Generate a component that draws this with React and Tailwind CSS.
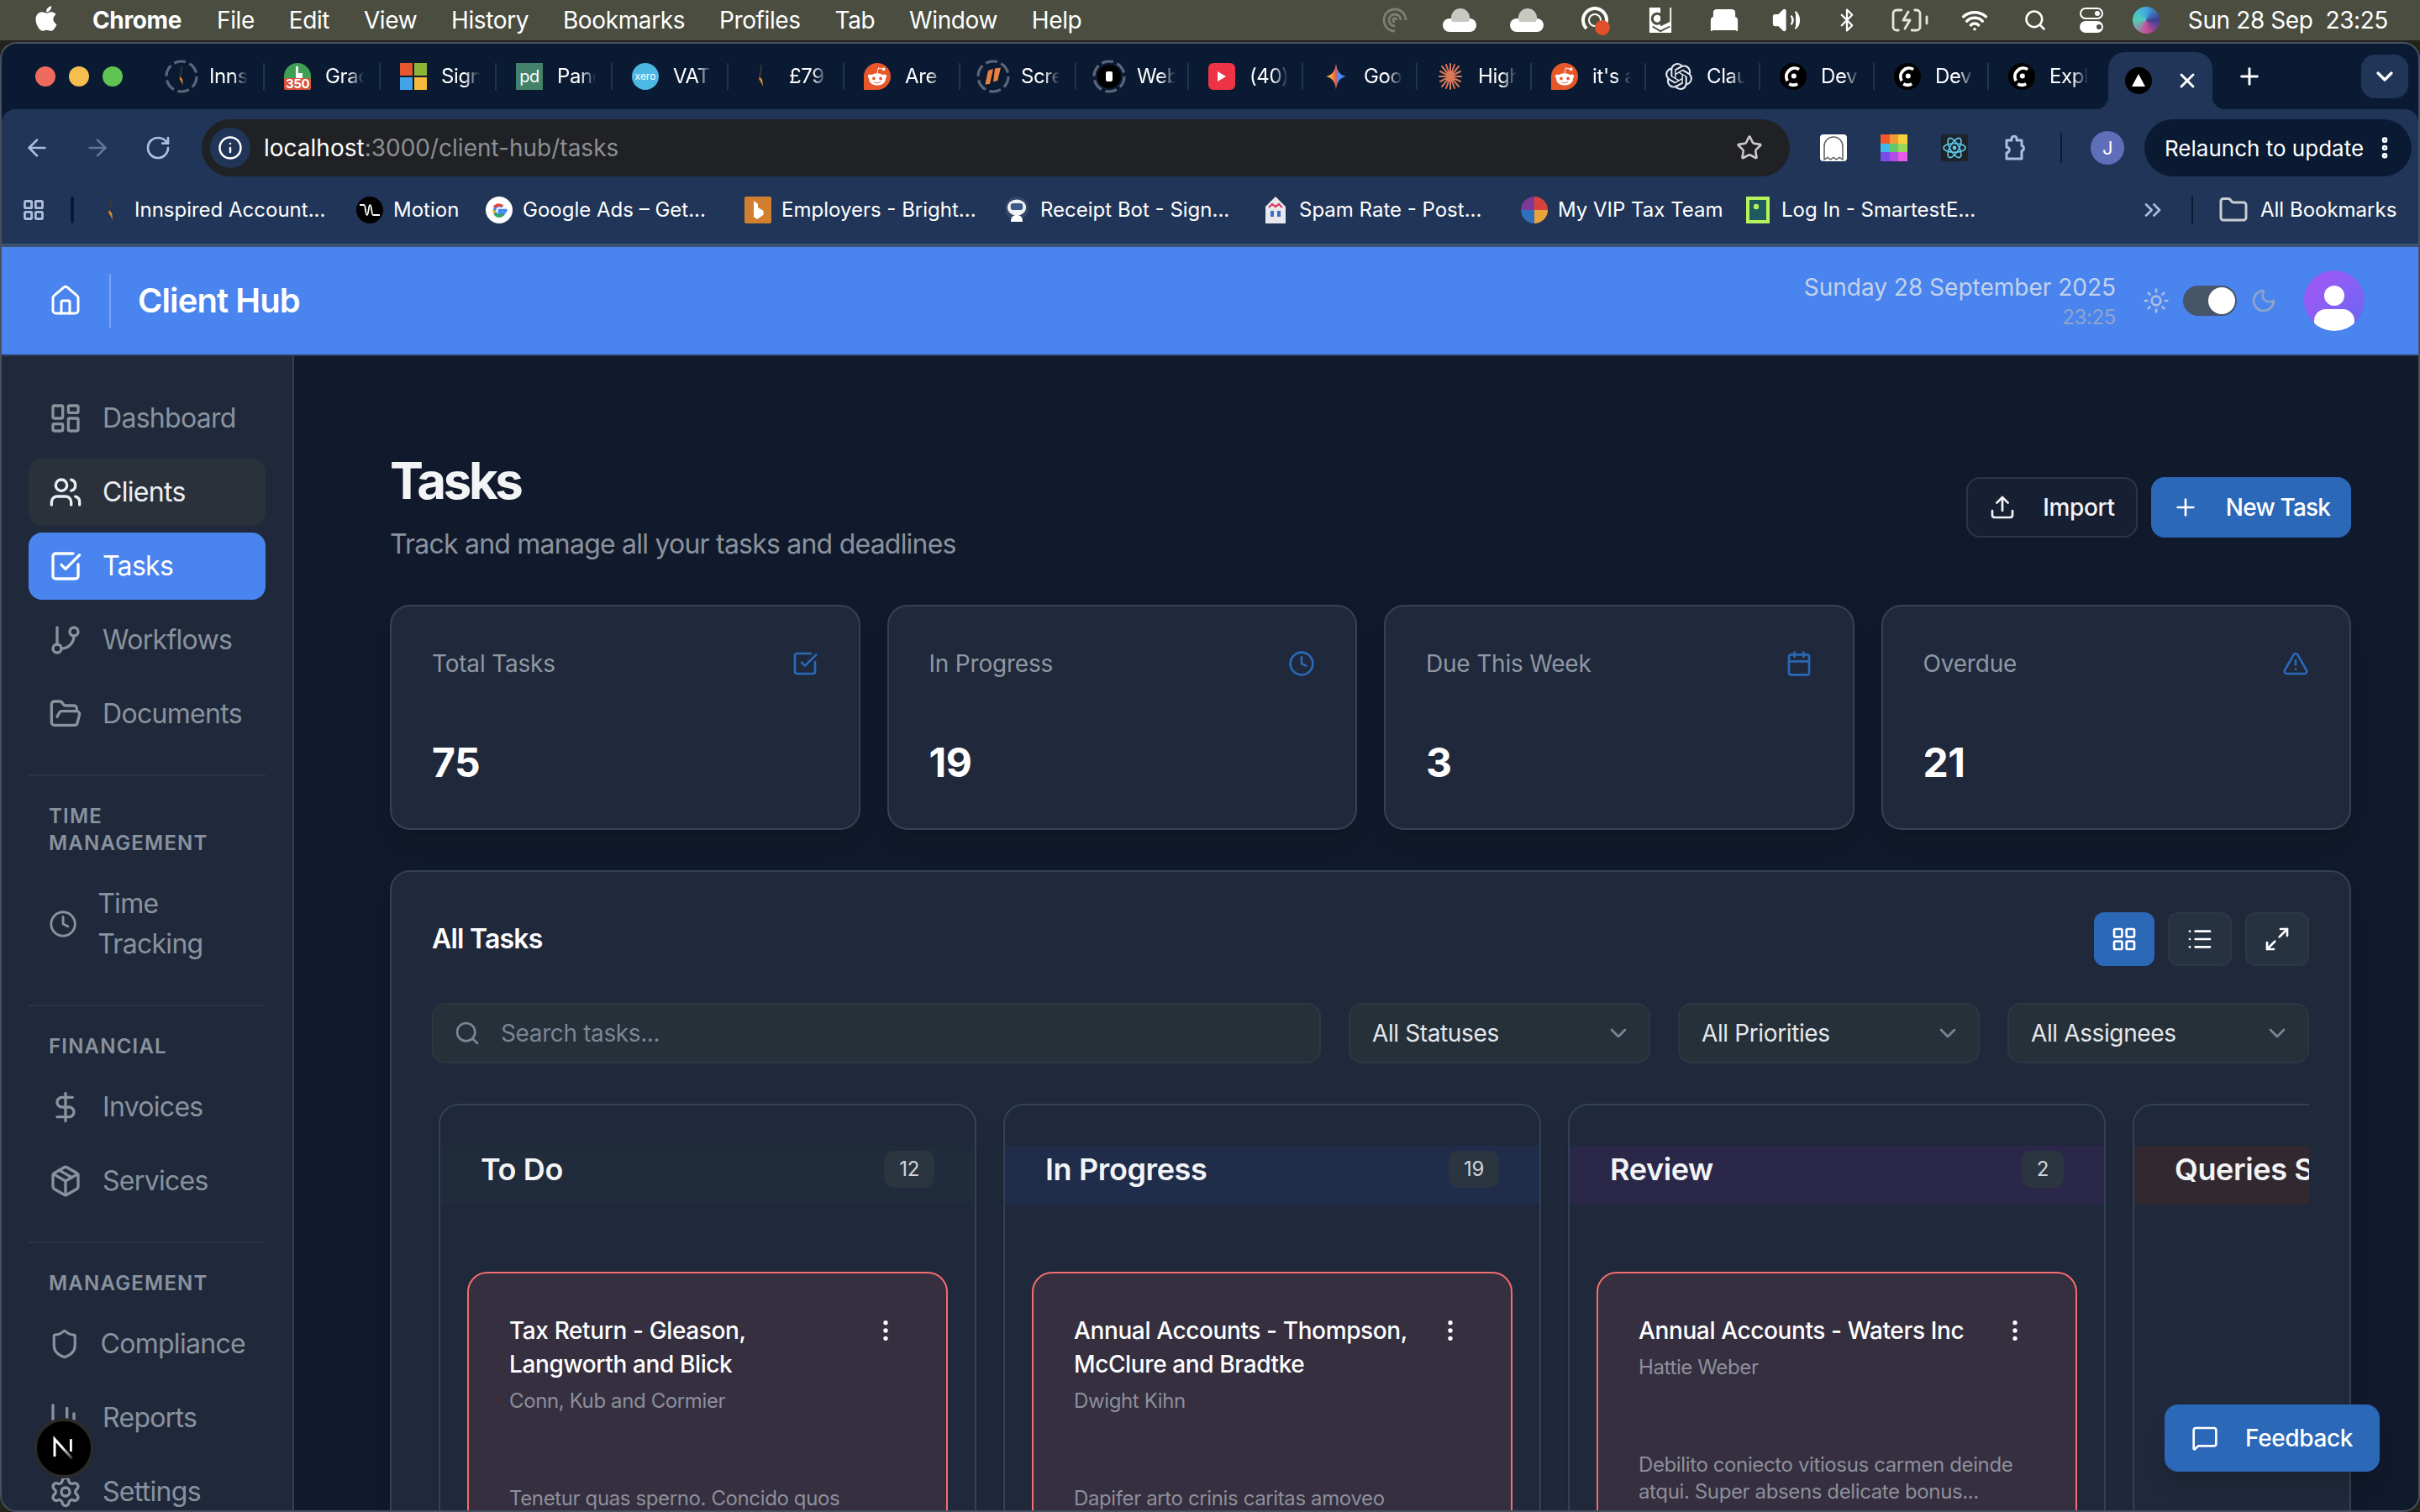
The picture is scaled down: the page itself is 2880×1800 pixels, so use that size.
import React from "react";
import {
  ArrowLeft,
  ArrowRight,
  BatteryCharging,
  BedDouble,
  Bluetooth,
  Calendar,
  ChartColumn,
  ChevronDown,
  ChevronsRight,
  Clock,
  DollarSign,
  EllipsisVertical,
  Folder,
  FolderOpen,
  House,
  Info,
  LayoutDashboard,
  LayoutGrid,
  List,
  Maximize2,
  MessageSquare,
  Moon,
  Package,
  Plus,
  RotateCw,
  Search,
  Settings,
  Shield,
  SquareCheckBig,
  Star,
  Sun,
  TriangleAlert,
  Upload,
  Users,
  Volume2,
  Wifi,
  X,
} from "lucide-react";
import { FaApple, FaRedditAlien } from "react-icons/fa";
import { SiOpenai } from "react-icons/si";

function GitBranchOld({ className }) {
  return (
    <svg viewBox="0 0 24 24" fill="none" stroke="currentColor" strokeWidth="2" strokeLinecap="round" strokeLinejoin="round" className={className}>
      <line x1="6" y1="3" x2="6" y2="15" />
      <circle cx="18" cy="6" r="3" />
      <circle cx="6" cy="18" r="3" />
      <path d="M18 9a9 9 0 0 1-9 9" />
    </svg>
  );
}

function Ring({ children }) {
  return (
    <div className="relative w-5 h-5 -mx-0.5 shrink-0 flex items-center justify-center">
      <svg viewBox="0 0 20 20" className="absolute inset-0 w-5 h-5">
        <circle cx="10" cy="10" r="9" fill="none" stroke="#5b6678" strokeWidth="1.6" strokeDasharray="7 2.4" />
      </svg>
      {children}
    </div>
  );
}

function Flame({ className = "w-4 h-4" }) {
  return (
    <svg viewBox="0 0 16 16" className={className}>
      <path d="M8 1 L7.6 6 L7 8" stroke="#3f3a33" strokeWidth="0.9" fill="none" />
      <path d="M7 8 L8.6 10 L9 14 L7.8 11.5 L6.6 9.5 Z" fill="#e88a2c" />
    </svg>
  );
}

function Reddit() {
  return (
    <div className="w-4 h-4 rounded-full rounded-bl-none bg-[#e8572a] flex items-center justify-center shrink-0">
      <FaRedditAlien className="w-3 h-3 text-white" />
    </div>
  );
}

function DevIcon() {
  return (
    <svg viewBox="0 0 16 16" className="w-4 h-4 shrink-0">
      <circle cx="8" cy="8" r="8" fill="#000" />
      <path d="M11.5 3.8 A5 5 0 0 0 4.6 10.6" fill="none" stroke="#fff" strokeWidth="1.9" />
      <circle cx="8.4" cy="7.8" r="1.5" fill="#fff" />
      <path d="M5.6 12.4 A5 5 0 0 0 10.6 12.4" fill="none" stroke="#fff" strokeWidth="1.9" />
    </svg>
  );
}

function MsLogo() {
  return (
    <div className="w-4 h-4 grid grid-cols-2 gap-[1px] shrink-0">
      <div className="bg-[#e4572e]" />
      <div className="bg-[#8db436]" />
      <div className="bg-[#43a3e8]" />
      <div className="bg-[#f6b93b]" />
    </div>
  );
}

const tabs = [
  {
    title: "Innspired",
    width: "w-[69px]",
    icon: (
      <Ring>
        <Flame className="w-3.5 h-3.5" />
      </Ring>
    ),
  },
  {
    title: "Grace",
    width: "w-[69px]",
    icon: (
      <svg viewBox="0 0 16 16" className="w-4 h-4 shrink-0">
        <path d="M0 8a8 8 0 0 1 16 0v2H0z" fill="#3f9f52" />
        <rect x="0" y="9" width="16" height="7" rx="1" fill="#d9513a" />
        <path d="M7 2h1.4v4H11v3H7z" fill="#fff" />
        <text x="8" y="15" textAnchor="middle" fontSize="7.5" fontWeight="700" fill="#fff" fontFamily="Inter">350</text>
      </svg>
    ),
  },
  { title: "Sign in", width: "w-[69px]", icon: <MsLogo /> },
  {
    title: "Pandadoc",
    width: "w-[69px]",
    icon: (
      <div className="w-4 h-4 bg-[#43826a] flex items-center justify-center shrink-0 text-[10px] leading-none text-white">pd</div>
    ),
  },
  {
    title: "VAT",
    width: "w-[69px]",
    icon: (
      <div className="w-4 h-4 rounded-full bg-[#4db8e4] flex items-center justify-center shrink-0 text-[6px] tracking-normal leading-none text-white">
        xero
      </div>
    ),
  },
  { title: "£79", width: "w-[69px]", icon: <Flame /> },
  { title: "Are you", width: "w-[69px]", icon: <Reddit /> },
  {
    title: "Screen",
    width: "w-[69px]",
    icon: (
      <Ring>
        <svg viewBox="0 0 12 12" className="w-3 h-3">
          <path d="M3 2.5 L6 1.5 L4 10.5 L1.2 10.8 Z M7 1.2 L10.5 0.8 L8.6 8.5 L6 9.2 Z" fill="#e8813f" />
        </svg>
      </Ring>
    ),
  },
  {
    title: "Web",
    width: "w-[67px]",
    icon: (
      <Ring>
        <div className="w-3.5 h-3.5 rounded-full bg-black flex items-center justify-center">
          <div className="w-1 h-1.5 bg-white rounded-[1px]" />
        </div>
      </Ring>
    ),
  },
  {
    title: "(40) You",
    width: "w-[68px]",
    icon: (
      <div className="w-4 h-4 rounded-[3px] bg-[#ee3344] flex items-center justify-center shrink-0">
        <div className="w-0 h-0 border-y-[3px] border-y-transparent border-l-[5px] border-l-white" />
      </div>
    ),
  },
  {
    title: "Google",
    width: "w-[68px]",
    icon: (
      <svg viewBox="0 0 16 16" className="w-4 h-4 shrink-0">
        <defs>
          <linearGradient id="gem" x1="0" y1="0" x2="1" y2="0">
            <stop offset="0.2" stopColor="#f5b53f" />
            <stop offset="0.5" stopColor="#e8574a" />
            <stop offset="0.6" stopColor="#4c8df6" />
            <stop offset="1" stopColor="#3f80f0" />
          </linearGradient>
        </defs>
        <path d="M8 0C8.4 4.6 10.4 7.4 14 8 10.4 8.6 8.4 11.4 8 16 7.6 11.4 5.6 8.6 2 8 5.6 7.4 7.6 4.6 8 0Z" fill="url(#gem)" />
      </svg>
    ),
  },
  {
    title: "Higher",
    width: "w-[68px]",
    icon: (
      <svg viewBox="0 0 16 16" className="w-4 h-4 shrink-0" stroke="#d97757" strokeWidth="1" strokeLinecap="round">
        <path d="M8 0.5V15.5M3 2L13 14M13 2L3 14M1.5 8H14.5M5.5 1L10.5 15M10.5 1L5.5 15M2 5L14 11M2 11L14 5" />
      </svg>
    ),
  },
  { title: "it's a", width: "w-[68px]", icon: <Reddit /> },
  { title: "Claude", width: "w-[68px]", icon: <SiOpenai className="w-4 h-4 text-[#e5e7eb] shrink-0" /> },
  { title: "Dev", width: "w-[68px]", icon: <DevIcon /> },
  { title: "Dev", width: "w-[68px]", icon: <DevIcon /> },
];

function Tab({ title, width, icon, last }) {
  return (
    <div className={`flex items-center h-4 shrink-0 pl-[11.5px] gap-[8.5px] ${width} ${last ? "" : "border-r border-r-[#1e3358]"}`}>
      <div className="w-4 h-4 flex items-center justify-center shrink-0">{icon}</div>
      <span className="w-[23px] overflow-hidden whitespace-nowrap text-xs leading-4 text-white [mask-image:linear-gradient(to_right,black_60%,transparent)]">
        {title}
      </span>
    </div>
  );
}

const bookmarks = [
  { title: "Innspired Account...", width: "w-[154px]", icon: <Flame /> },
  {
    title: "Motion",
    width: "w-[77px]",
    icon: (
      <svg viewBox="0 0 16 16" className="w-4 h-4">
        <circle cx="8" cy="8" r="8" fill="#000" />
        <path d="M2 5h2.6c1 0 .8 6 1.8 6s.8-6 1.8-6 .8 6 1.8 6H14" fill="none" stroke="#fff" strokeWidth="0.9" />
      </svg>
    ),
  },
  {
    title: "Google Ads – Get...",
    width: "w-[154px]",
    icon: (
      <svg viewBox="0 0 16 16" className="w-4 h-4">
        <circle cx="8" cy="8" r="8" fill="#fff" />
        <path d="M12.8 8.2H8.2v1.8h2.6A3 3 0 1 1 10 5.9" fill="none" stroke="#4285f4" strokeWidth="1.7" />
        <path d="M5.2 6.4A3 3 0 0 1 10 5.9" fill="none" stroke="#ea4335" strokeWidth="1.7" />
        <path d="M5 8.2a3 3 0 0 0 .3 1.5" fill="none" stroke="#fbbc05" strokeWidth="1.7" />
        <path d="M5.5 10.1a3 3 0 0 0 4.8.6" fill="none" stroke="#34a853" strokeWidth="1.7" />
      </svg>
    ),
  },
  {
    title: "Employers - Bright...",
    width: "w-[154px]",
    icon: (
      <svg viewBox="0 0 16 16" className="w-4 h-4">
        <rect width="16" height="16" rx="1" fill="#d17f2e" />
        <path d="M5.5 2.5V12l2 1.5 3.8-2.6v-2.4L8 6.5v-2z" fill="#fff" />
      </svg>
    ),
  },
  {
    title: "Receipt Bot - Sign...",
    width: "w-[154px]",
    icon: (
      <svg viewBox="0 0 16 16" className="w-4 h-4">
        <circle cx="8" cy="7" r="7" fill="#33476a" />
        <ellipse cx="8" cy="6.5" rx="5.5" ry="4.8" fill="#f1f2f4" />
        <rect x="4.4" y="4" width="7.2" height="4" rx="1.4" fill="#3b5a85" />
        <path d="M4.5 15c0-3 1.5-4 3.5-4s3.5 1 3.5 4z" fill="#fff" />
      </svg>
    ),
  },
  {
    title: "Spam Rate - Post...",
    width: "w-[154px]",
    icon: (
      <svg viewBox="0 0 16 16" className="w-4 h-4">
        <path d="M2 6l6-6 6 6v10H2z" fill="#e8e9ec" />
        <path d="M4 6.5L6 4.5 8 6l2-1.5 2 2" fill="none" stroke="#d8406a" strokeWidth="1.1" />
        <path d="M5 8.5h2v3.5H5zM9 8.5h2v3.5H9z" fill="#3a6fc7" />
      </svg>
    ),
  },
  {
    title: "My VIP Tax Team",
    width: "w-[133px]",
    icon: (
      <div className="w-4 h-4 rounded-full bg-[conic-gradient(#d9423a_0_25%,#e8a33a_25%_50%,#2f6fbd_50%_75%,#7d3a96_75%)]" />
    ),
  },
  {
    title: "Log In - SmartestE...",
    width: "w-[154px]",
    icon: (
      <svg viewBox="0 0 16 16" className="w-4 h-4">
        <rect x="1" width="14" height="16" fill="#b7f25a" />
        <rect x="3" y="2" width="10" height="12" fill="#1f5a60" />
        <circle cx="7" cy="6" r="1.6" fill="#b7f25a" />
      </svg>
    ),
  },
];

function Bookmark({ title, width, icon }) {
  return (
    <div className={`flex items-center gap-[6px] shrink-0 ${width}`}>
      <div className="w-4 h-4 shrink-0">{icon}</div>
      <span className="whitespace-nowrap text-xs tracking-normal text-white">{title}</span>
    </div>
  );
}

function NavItem({ icon: Icon, label, state }) {
  const look =
    state === "active"
      ? "bg-[#4a84ee] text-white"
      : state === "hover"
        ? "bg-[#2a313b] text-[#eceef1]"
        : "text-[#8a929e]";
  return (
    <div className={`flex items-center gap-3 rounded-lg px-3 py-2 text-base leading-6 tracking-[-0.35px] ${look}`}>
      <Icon className="w-5 h-5" strokeWidth={2} />
      <span>{label}</span>
    </div>
  );
}

function NavSection({ label, children }) {
  return (
    <div className="mt-4 border-t border-t-[#2a3544] pt-4">
      <div className="px-3 mb-2 text-xs leading-4 font-semibold uppercase tracking-wider text-[#8a929e]">{label}</div>
      <div className="flex flex-col gap-1">{children}</div>
    </div>
  );
}

function Sidebar() {
  return (
    <aside className="w-[174px] shrink-0 overflow-hidden border-r border-r-[#334155] bg-[#1f293b] px-4 pt-[17px]">
      <div className="flex flex-col gap-1">
        <NavItem icon={LayoutDashboard} label="Dashboard" />
        <NavItem icon={Users} label="Clients" state="hover" />
        <NavItem icon={SquareCheckBig} label="Tasks" state="active" />
        <NavItem icon={GitBranchOld} label="Workflows" />
        <NavItem icon={FolderOpen} label="Documents" />
      </div>
      <NavSection label="Time Management">
        <NavItem icon={Clock} label="Time Tracking" />
      </NavSection>
      <NavSection label="Financial">
        <NavItem icon={DollarSign} label="Invoices" />
        <NavItem icon={Package} label="Services" />
      </NavSection>
      <NavSection label="Management">
        <NavItem icon={Shield} label="Compliance" />
        <NavItem icon={ChartColumn} label="Reports" />
        <NavItem icon={Settings} label="Settings" />
      </NavSection>
    </aside>
  );
}

function StatCard({ label, value, icon: Icon }) {
  return (
    <div className="h-[134px] rounded-xl border border-[#364254] bg-[#1f293b] p-6 shadow-lg">
      <div className="flex items-center justify-between h-5">
        <span className="text-sm tracking-[-0.1px] text-[#8f97a3]">{label}</span>
        <Icon className="w-4 h-4 text-[#2b68b8]" strokeWidth={2} />
      </div>
      <div className="mt-[33px] text-2xl leading-8 font-bold text-white">{value}</div>
    </div>
  );
}

function Select({ label }) {
  return (
    <div className="flex h-9 w-[179.5px] shrink-0 items-center justify-between rounded-lg border border-[#2b3742] bg-[#253039] pl-[13px] pr-2.5 text-sm text-[#e5e7eb]">
      <span>{label}</span>
      <ChevronDown className="w-4 h-4 text-[#7b8594]" />
    </div>
  );
}

function TaskCard({ title, client, description }) {
  return (
    <div className="rounded-xl border border-[#f26d6d] bg-[#352f3f] p-6">
      <div className="flex items-start justify-between">
        <div className="w-[205px] text-sm leading-5 font-medium text-white">{title}</div>
        <EllipsisVertical className="mt-[2px] mr-1 w-4 h-4 shrink-0 text-white" />
      </div>
      <div className="mt-1 text-xs leading-4 text-[#8d8f9b]">{client}</div>
      <div className="mt-[42px] text-xs leading-4 text-[#8d8f9b]">{description}</div>
    </div>
  );
}

function Column({ title, count, band, card }) {
  return (
    <div className="w-[320px] shrink-0 rounded-xl border border-[#334155] bg-[#1f293b] pt-6 shadow-lg">
      <div className={`flex h-[35px] items-start justify-between px-6 ${band}`}>
        <span className="whitespace-nowrap text-lg leading-7 font-semibold text-[#f3f4f6]">{title}</span>
        {count ? <span className="mt-[3px] rounded-md bg-[#2b3540] px-[9px] py-[3px] text-xs leading-4 text-[#d1d5db]">{count}</span> : null}
      </div>
      <div className="mt-10 px-4 h-[300px]">{card ? <TaskCard {...card} /> : null}</div>
    </div>
  );
}

function StatusCell({ width, children }) {
  return <div className={`flex items-center justify-center ${width}`}>{children}</div>;
}

export default function App() {
  return (
    <div className="[zoom:2] relative flex h-[900px] w-[1440px] flex-col overflow-hidden bg-[#23231c] font-['Inter',sans-serif] tracking-[-0.19px]">
      {/* mac menu bar */}
      <div className="flex h-6 shrink-0 items-center bg-[#4a4d3f] pl-[20px] text-sm font-medium text-white">
        <FaApple className="w-[15px] h-[17px] -mt-[2px] mr-[20px]" />
        <span className="font-bold mr-[21px]">Chrome</span>
        <div className="flex gap-[20.4px] font-normal">
          <span>File</span>
          <span>Edit</span>
          <span>View</span>
          <span>History</span>
          <span>Bookmarks</span>
          <span>Profiles</span>
          <span>Tab</span>
          <span>Window</span>
          <span>Help</span>
        </div>
        <div className="ml-auto flex items-center pr-[19px]">
          <StatusCell width="w-[38px]">
            <svg viewBox="0 0 16 16" className="w-4 h-4 text-[#7c7e72]" fill="none" stroke="currentColor" strokeWidth="1.4">
              <path d="M8 14.5A6.5 6.5 0 1 1 14.5 8M8 11.5A3.5 3.5 0 1 1 11.5 8 M8 9a1 1 0 1 1 1-1" />
            </svg>
          </StatusCell>
          {["w-[39px]", "w-[41px]"].map((w) => (
            <StatusCell key={w} width={w}>
              <div className="relative h-[14px] w-[20px]">
                <div className="absolute bottom-0 left-0 h-[8px] w-[20px] rounded-full bg-white" />
                <div className="absolute top-0 left-[5px] h-[11px] w-[11px] rounded-full bg-[#c9c9c2]" />
                <div className="absolute bottom-0 left-[3px] h-[6px] w-[15px] rounded-full bg-white" />
              </div>
            </StatusCell>
          ))}
          <StatusCell width="w-[40px]">
            <div className="relative w-4 h-4 rounded-full border-2 border-white border-b-transparent">
              <div className="absolute left-[2px] top-[2px] h-[8px] w-[8px] rounded-full border border-white" />
              <div className="absolute -right-[3px] -bottom-[3px] h-[9px] w-[9px] rounded-full bg-[#e0502a]" />
            </div>
          </StatusCell>
          <StatusCell width="w-[38px]">
            <svg viewBox="0 0 16 18" className="w-[15px] h-[18px]">
              <path d="M1 1h14v16H1z" fill="#fff" />
              <path d="M8 1h6v9l-6 3z" fill="#4a4d3f" />
              <circle cx="6" cy="8" r="3.2" fill="none" stroke="#4a4d3f" strokeWidth="1.6" />
              <path d="M3 13l5 3 6-3" fill="none" stroke="#4a4d3f" strokeWidth="1" />
            </svg>
          </StatusCell>
          <StatusCell width="w-[38px]">
            <BedDouble className="w-[18px] h-[18px] text-white" fill="#fff" strokeWidth={1.5} />
          </StatusCell>
          <StatusCell width="w-[36px]">
            <Volume2 className="w-[18px] h-[18px] text-white" fill="#fff" strokeWidth={1.5} />
          </StatusCell>
          <StatusCell width="w-[36px]">
            <Bluetooth className="w-[15px] h-[15px] text-white" strokeWidth={1.8} />
          </StatusCell>
          <StatusCell width="w-[39px]">
            <BatteryCharging className="w-[24px] h-[24px] text-[#e5e5df]" strokeWidth={1.4} />
          </StatusCell>
          <StatusCell width="w-[38px]">
            <Wifi className="w-[16px] h-[16px] text-white" strokeWidth={2.6} />
          </StatusCell>
          <StatusCell width="w-[34px]">
            <Search className="w-[14px] h-[14px] text-white" strokeWidth={2.2} />
          </StatusCell>
          <StatusCell width="w-[33px]">
            <div className="flex flex-col gap-[1px]">
              <div className="flex h-[7px] w-[14px] items-center justify-end rounded-full border border-white pr-[1px]">
                <div className="h-[3px] w-[3px] rounded-full bg-white" />
              </div>
              <div className="flex h-[7px] w-[14px] items-center justify-end rounded-full bg-white pr-[1px]">
                <div className="h-[3px] w-[3px] rounded-full bg-[#4a4d3f]" />
              </div>
            </div>
          </StatusCell>
          <StatusCell width="w-[32px]">
            <div className="w-4 h-4 rounded-full bg-[conic-gradient(#3fa9e0,#3c3f8f,#c94e9b,#4fd0b5,#3fa9e0)]" />
          </StatusCell>
          <span className="ml-[9px] whitespace-pre font-normal tracking-[-0.2px]">Sun 28 Sep  23:25</span>
        </div>
      </div>

      {/* browser window */}
      <div className="mt-[1px] flex min-h-0 flex-1 flex-col overflow-hidden rounded-t-[10px] rounded-b-[10px] border border-[#47505f] bg-[#0a1a33]">
        <div className="relative flex h-[39px] shrink-0 items-center">
          <div className="flex h-full w-[87.5px] shrink-0 items-center gap-2 pl-5">
            <div className="h-3 w-3 rounded-full bg-[#ef6a5e]" />
            <div className="h-3 w-3 rounded-full bg-[#f6bd4f]" />
            <div className="h-3 w-3 rounded-full bg-[#5fc454]" />
          </div>
          {tabs.map((tab, i) => (
            <Tab key={i} {...tab} />
          ))}
          <Tab title="Explore" width="w-[71px]" icon={<DevIcon />} last />
          <div className="relative flex h-[34px] w-[62px] shrink-0 items-center self-end rounded-t-[10px] bg-[#203558] pl-[10px]">
            <span className="absolute -left-2 bottom-0 h-2 w-2 bg-[radial-gradient(circle_at_0_0,transparent_8px,#203558_8.5px)]" />
            <span className="absolute -right-2 bottom-0 h-2 w-2 bg-[radial-gradient(circle_at_100%_0,transparent_8px,#203558_8.5px)]" />
            <svg viewBox="0 0 16 16" className="w-4 h-4 shrink-0">
              <circle cx="8" cy="8" r="8" fill="#000" />
              <path d="M8 4L12 11.5H4Z" fill="#fff" />
            </svg>
            <X className="ml-[14px] w-[14px] h-[14px] text-white" strokeWidth={2.5} />
          </div>
          <Plus className="ml-[14px] w-4 h-4 text-white" strokeWidth={2.2} />
          <div className="ml-auto mr-[6px] flex h-[26px] w-[28px] items-center justify-center rounded-lg bg-[#203558]">
            <ChevronDown className="w-4 h-4 text-white" strokeWidth={2.5} />
          </div>
        </div>

        <div className="shrink-0 rounded-t-lg bg-[#203558]">
          <div className="flex h-[46px] items-start pt-[6px] pl-[13px]">
            <div className="flex h-[34px] items-center gap-5 text-[#aebfdc]">
              <ArrowLeft className="w-4 h-4" />
              <ArrowRight className="w-4 h-4 text-[#5d7699]" />
              <RotateCw className="w-4 h-4" />
            </div>
            <div className="ml-[18px] flex h-[34px] w-[945px] shrink-0 items-center rounded-full bg-[#202124] pl-[5px] pr-4">
              <div className="flex h-6 w-6 items-center justify-center rounded-full bg-[#203558]">
                <Info className="w-[15px] h-[15px] text-white" />
              </div>
              <span className="ml-2 text-sm tracking-normal text-white">
                localhost<span className="text-[#8c8f94]">:3000/client-hub/tasks</span>
              </span>
              <Star className="ml-auto w-4 h-4 text-[#c8c8c8]" />
            </div>
            <div className="ml-[18px] flex h-[34px] items-center gap-5">
              <svg viewBox="0 0 16 16" className="w-4 h-4">
                <rect width="16" height="16" rx="2" fill="#fff" />
                <path d="M2.5 15V7a5.5 5.5 0 0 1 11 0v8l-2-1.3-1.8 1.3L8 13.7 6.3 15 4.5 13.7z" fill="none" stroke="#666" strokeWidth="0.8" />
              </svg>
              <div className="grid h-4 w-4 grid-cols-3 grid-rows-3">
                <div className="bg-[#f2592a]" />
                <div className="bg-[#f59a33]" />
                <div className="bg-[#f7d13d]" />
                <div className="bg-[#3fb8ea]" />
                <div className="bg-[#65c76b]" />
                <div className="bg-[#9bd85a]" />
                <div className="bg-[#7a4de8]" />
                <div className="bg-[#b04de8]" />
                <div className="bg-[#e85de8]" />
              </div>
              <svg viewBox="0 0 16 16" className="w-4 h-4">
                <rect width="16" height="16" rx="1.5" fill="#1e2229" />
                <g fill="none" stroke="#5fc9e8" strokeWidth="0.8">
                  <ellipse cx="8" cy="8" rx="6.5" ry="2.6" />
                  <ellipse cx="8" cy="8" rx="6.5" ry="2.6" transform="rotate(60 8 8)" />
                  <ellipse cx="8" cy="8" rx="6.5" ry="2.6" transform="rotate(120 8 8)" />
                </g>
                <circle cx="8" cy="8" r="1.2" fill="#5fc9e8" />
              </svg>
              <svg viewBox="0 0 16 16" className="w-4 h-4 text-[#aebfdc]" fill="none" stroke="currentColor" strokeWidth="1.5" strokeLinejoin="round">
                <path d="M3 3.5h3V2.2a1.6 1.6 0 0 1 3 0V3.5h3v3.2a1.6 1.6 0 0 1 0 3.1v4.7H3v-3.6a1.6 1.6 0 0 0 0-3.3z" />
              </svg>
            </div>
            <div className="ml-[19px] mt-[8px] h-[18px] w-[1px] bg-[#0a1a33]" />
            <div className="ml-[17px] mt-[7px] flex h-5 w-5 items-center justify-center rounded-full bg-[#5f6eb8] text-[11px] text-white">J</div>
            <div className="ml-3 flex h-[34px] w-[159px] items-center justify-between rounded-full bg-[#0a1a33] pl-3 pr-2 text-[13px] tracking-normal text-white">
              <span className="whitespace-nowrap">Relaunch to update</span>
              <EllipsisVertical className="w-4 h-4" strokeWidth={3} />
            </div>
          </div>
          <div className="flex h-[34px] items-start pl-[12px]">
            <div className="flex h-7 items-center">
              <LayoutGrid className="w-[14px] h-[14px] text-[#aebfdc]" strokeWidth={2.4} />
              <div className="ml-[15px] mr-[14px] h-4 w-[2px] rounded-full bg-[#0a1a33]" />
              {bookmarks.map((b) => (
                <Bookmark key={b.title} {...b} />
              ))}
              <ChevronsRight className="ml-[81px] w-4 h-4 text-[#aebfdc]" />
              <div className="ml-[15px] h-4 w-[1px] bg-[#0a1a33]" />
              <Folder className="ml-[15px] w-[18px] h-[18px] text-[#c9ccd1]" />
              <span className="ml-[7px] whitespace-nowrap text-xs tracking-normal text-white">All Bookmarks</span>
            </div>
          </div>
        </div>
        <div className="h-[2px] shrink-0 bg-[#3d5270]" />

        {/* app header */}
        <header className="flex h-[65px] shrink-0 items-center border-b border-b-[#2d3e57] bg-[#4a84ee] pl-[28px] pr-[32px]">
          <House className="w-5 h-5 text-white" strokeWidth={1.8} />
          <div className="ml-[16px] h-8 w-[1px] bg-white/25" />
          <h1 className="ml-[16px] text-xl font-semibold tracking-[-0.46px] text-white">Client Hub</h1>
          <div className="ml-auto flex flex-col items-end">
            <span className="text-sm leading-5 tracking-normal text-[#c3d2ea]">Sunday 28 September 2025</span>
            <span className="text-xs leading-4 text-[#8fa5c9]">23:25</span>
          </div>
          <Sun className="ml-[16px] w-4 h-4 text-[#a9bfe5]" />
          <div className="ml-2 flex h-[18px] w-8 items-center justify-end rounded-full bg-[#475569] pr-[1px]">
            <div className="h-4 w-4 rounded-full bg-white" />
          </div>
          <Moon className="ml-2 w-4 h-4 text-[#8fa5c9]" />
          <div className="relative ml-4 h-9 w-9 overflow-hidden rounded-full bg-gradient-to-br from-[#a855f7] to-[#6366f1]">
            <div className="absolute left-1/2 top-[9px] h-[12px] w-[12px] -translate-x-1/2 rounded-full bg-white" />
            <div className="absolute left-1/2 top-[23px] h-[14px] w-[24px] -translate-x-1/2 rounded-full bg-white" />
          </div>
        </header>

        <div className="flex min-h-0 flex-1">
          <Sidebar />
          <main className="min-w-0 flex-1 overflow-hidden bg-[#111a2c] pl-[57px] pr-[40px] pt-14">
            <div className="flex items-start justify-between">
              <div>
                <h2 className="text-3xl leading-9 font-bold tracking-[-1.7px] text-[#f3f4f6]">Tasks</h2>
                <p className="mt-[8px] text-base tracking-[-0.39px] text-[#8a929e]">Track and manage all your tasks and deadlines</p>
              </div>
              <div className="mt-4 flex gap-2">
                <button className="flex h-9 w-[102px] items-center justify-center gap-4 rounded-lg border border-[#2b3648] bg-[#172032] text-sm font-medium text-[#f3f4f6]">
                  <Upload className="w-4 h-4" />
                  Import
                </button>
                <button className="flex h-9 w-[119px] items-center justify-center gap-4 rounded-lg bg-[#2b68b8] text-sm font-medium tracking-[-0.4px] text-white">
                  <Plus className="w-4 h-4" />
                  New Task
                </button>
              </div>
            </div>

            <div className="mt-6 grid grid-cols-4 gap-4">
              <StatCard label="Total Tasks" value="75" icon={SquareCheckBig} />
              <StatCard label="In Progress" value="19" icon={Clock} />
              <StatCard label="Due This Week" value="3" icon={Calendar} />
              <StatCard label="Overdue" value="21" icon={TriangleAlert} />
            </div>

            <section className="mt-6 h-[600px] overflow-hidden rounded-xl border border-[#334155] bg-[#1f293b] p-6 shadow-lg">
              <div className="flex h-8 items-center justify-between">
                <h3 className="text-base font-semibold tracking-[-0.4px] text-white">All Tasks</h3>
                <div className="flex gap-2">
                  <div className="flex h-8 w-9 items-center justify-center rounded-md bg-[#2b68b8] text-white">
                    <LayoutGrid className="w-4 h-4" />
                  </div>
                  <div className="flex h-8 w-[38px] items-center justify-center rounded-md border border-[#2d3846] bg-[#273240] text-white">
                    <List className="w-4 h-4" />
                  </div>
                  <div className="flex h-8 w-[38px] items-center justify-center rounded-md border border-[#2d3846] bg-[#273240] text-white">
                    <Maximize2 className="w-4 h-4" />
                  </div>
                </div>
              </div>

              <div className="mt-[22px] flex gap-[16.5px]">
                <div className="flex h-9 flex-1 items-center rounded-lg border border-[#2b3742] bg-[#253039] pl-3">
                  <Search className="w-4 h-4 text-[#7b8594]" />
                  <span className="ml-3 text-sm text-[#7b8594]">Search tasks...</span>
                </div>
                <Select label="All Statuses" />
                <Select label="All Priorities" />
                <Select label="All Assignees" />
              </div>

              <div className="mt-6 flex gap-4 overflow-hidden pl-1">
                <Column
                  title="To Do"
                  count="12"
                  band="bg-[#202b3b]"
                  card={{
                    title: "Tax Return - Gleason, Langworth and Blick",
                    client: "Conn, Kub and Cormier",
                    description: "Tenetur quas sperno. Concido quos vulgus tego acies...",
                  }}
                />
                <Column
                  title="In Progress"
                  count="19"
                  band="bg-[#1f2d4a]"
                  card={{
                    title: "Annual Accounts - Thompson, McClure and Bradtke",
                    client: "Dwight Kihn",
                    description: "Dapifer arto crinis caritas amoveo consequuntur tutis...",
                  }}
                />
                <Column
                  title="Review"
                  count="2"
                  band="bg-[#2a2749]"
                  card={{
                    title: "Annual Accounts - Waters Inc",
                    client: "Hattie Weber",
                    description: "Debilito coniecto vitiosus carmen deinde atqui. Super absens delicate bonus...",
                  }}
                />
                <Column title="Queries Sent" band="bg-[#31292f]" />
              </div>
            </section>
          </main>
        </div>
      </div>

      {/* floating overlays */}
      <div className="absolute bottom-[20px] left-[20px] flex h-9 w-9 items-center justify-center rounded-full border-2 border-[#2a2a2a] bg-black">
        <svg viewBox="0 0 16 16" className="w-4 h-4">
          <defs>
            <linearGradient id="nfade" x1="0" y1="0" x2="1" y2="1">
              <stop offset="0.4" stopColor="#fff" />
              <stop offset="1" stopColor="#fff" stopOpacity="0.2" />
            </linearGradient>
          </defs>
          <path d="M2.5 13V2.6L13 14.2" fill="none" stroke="url(#nfade)" strokeWidth="1.5" />
          <path d="M12.2 2.6V10" fill="none" stroke="#fff" strokeWidth="1.4" />
        </svg>
      </div>
      <button className="absolute bottom-6 right-6 flex h-10 w-[128px] items-center justify-center gap-4 rounded-lg bg-[#2b68b8] text-sm font-medium text-white shadow-lg">
        <MessageSquare className="w-4 h-4" />
        Feedback
      </button>
    </div>
  );
}
